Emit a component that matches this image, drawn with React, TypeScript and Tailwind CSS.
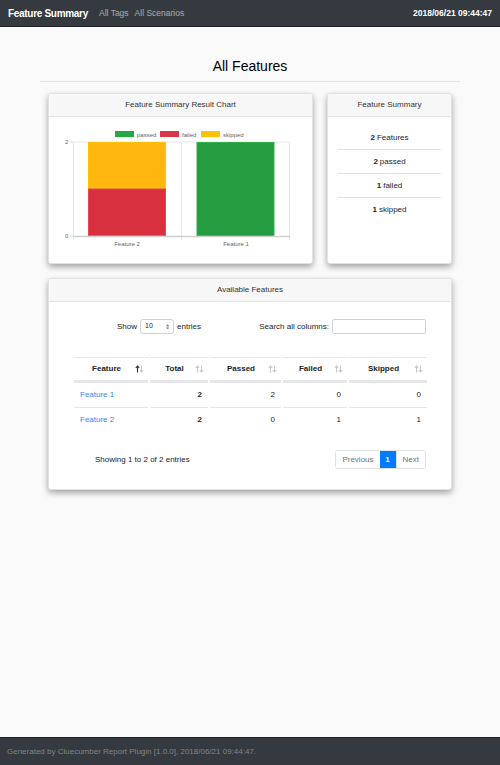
const FEATURES = [
  { name: 'Feature 1', total: 2, passed: 2, failed: 0, skipped: 0 },
  { name: 'Feature 2', total: 2, passed: 0, failed: 1, skipped: 1 },
]

const COLS = ['Feature', 'Total', 'Passed', 'Failed', 'Skipped']

/** Cluecumber-style feature summary report page. */
export default function App() {
  return (
    <div className="flex h-[765px] flex-col bg-[#fafafa] font-['Liberation_Sans',Arial,sans-serif] text-[#212529]">
      <nav className="flex h-[27px] shrink-0 items-center border-b border-[#1d2124] bg-[#343a40] px-[8px]">
        <span className="text-[10px] font-bold tracking-[-0.3px] text-white">Feature Summary</span>
        <span className="ml-[11px] text-[8.5px] text-white/55">All Tags</span>
        <span className="ml-[6px] text-[8.5px] text-white/55">All Scenarios</span>
        <span className="ml-auto text-[8.5px] font-bold text-white">2018/06/21 09:44:47</span>
      </nav>

      <main className="flex-1 px-[40px]">
        <h1 className="pt-[29px] text-center text-[14px] leading-[20px] font-medium text-black">All Features</h1>
        <hr className="mt-[5px] border-[#e3e3e3]" />

        <div className="mx-[8px] mt-[11px] flex gap-[14px]">
          <Card title="Feature Summary Result Chart" className="w-[265px]">
            <Chart />
          </Card>
          <Card title="Feature Summary" className="flex-1">
            <ul className="mx-[10px] pt-[9px] text-center text-[8px]">
              <SummaryRow n={2} label="Features" />
              <SummaryRow n={2} label="passed" />
              <SummaryRow n={1} label="failed" />
              <SummaryRow n={1} label="skipped" last />
            </ul>
          </Card>
        </div>

        <Card title="Available Features" className="mx-[8px] mt-[14px] h-[212px]">
          <div className="px-[25px]">
            <div className="mt-[17px] flex items-center text-[8px]">
              <div className="ml-[43px] flex items-center">
                <span>Show</span>
                <div className="ml-[3px] flex h-[15px] w-[34px] items-center justify-between rounded-[3px] border border-[#ced4da] bg-white pr-[3px] pl-[4px] text-[7px]">
                  <span>10</span>
                  <span className="text-[6px] leading-none text-[#555]">⇕</span>
                </div>
                <span className="ml-[3px]">entries</span>
              </div>
              <span className="ml-auto">Search all columns:</span>
              <div className="ml-[3px] h-[15px] w-[94px] rounded-[2px] border border-[#ced4da] bg-white" />
            </div>

            <div className="mt-[23px] grid grid-cols-[74px_58px_71px_64px_78px] gap-x-[2px] text-[8px]">
              {COLS.map((c) => (
                <div
                  key={c}
                  className="relative flex h-[26px] items-center justify-center border-t border-b-[3px] border-[#e5e7ea] pr-[9px] font-bold"
                >
                  {c}
                  <SortIcon active={c === 'Feature'} />
                </div>
              ))}
              {FEATURES.map((f, i) => {
                const cell =
                  'flex items-center px-[6px] ' + (i === 0 ? 'h-[25px] border-b border-[#e5e7ea]' : 'h-[24px]')
                return [
                  <div key={f.name} className={cell + ' text-[#3d86f5]'}>{f.name}</div>,
                  <div key={f.name + 't'} className={cell + ' justify-end font-bold'}>{f.total}</div>,
                  <div key={f.name + 'p'} className={cell + ' justify-end'}>{f.passed}</div>,
                  <div key={f.name + 'f'} className={cell + ' justify-end'}>{f.failed}</div>,
                  <div key={f.name + 's'} className={cell + ' justify-end'}>{f.skipped}</div>,
                ]
              })}
            </div>

            <div className="mt-[18px] flex items-center text-[8px]">
              <span className="ml-[21px]">Showing 1 to 2 of 2 entries</span>
              <div className="ml-auto flex h-[19px] overflow-hidden rounded-[3px] border border-[#dee2e6] text-[#6c757d]">
                <span className="flex items-center bg-white px-[6px]">Previous</span>
                <span className="flex w-[16px] items-center justify-center bg-[#007bff] font-bold text-white">1</span>
                <span className="flex items-center border-l border-[#dee2e6] bg-white px-[6px]">Next</span>
              </div>
            </div>
          </div>
        </Card>
      </main>

      <footer className="flex h-[28px] shrink-0 items-center border-t border-[#1d2124] bg-[#343a40] px-[7px] text-[8px] text-[#80858a]">
        Generated by Cluecumber Report Plugin [1.0.0], 2018/06/21 09:44:47.
      </footer>
    </div>
  )
}

/** DataTables-style up/down sort arrows; the up arrow darkens on the sorted column. */
function SortIcon({ active }: { active: boolean }) {
  return (
    <svg width="9" height="8" viewBox="0 0 9 8" className="absolute right-[4px]" fill="none" strokeWidth="1.1">
      <path d="M2.5 7.5V1M0.8 2.8L2.5 1L4.2 2.8" stroke={active ? '#333' : '#c8c8c8'} />
      <path d="M6.5 0.5V7M4.8 5.2L6.5 7L8.2 5.2" stroke="#c8c8c8" />
    </svg>
  )
}

function Card({
  title,
  className,
  children,
}: {
  title: string
  className?: string
  children: React.ReactNode
}) {
  return (
    <div
      className={
        'overflow-hidden rounded-[3px] border border-[#e2e2e2] bg-white shadow-[0_3px_6px_rgba(0,0,0,0.35)] ' +
        (className ?? '')
      }
    >
      <div className="flex h-[23px] items-center justify-center border-b border-[#e4e4e4] bg-[#f7f7f7] text-[8px] text-[#333]">
        {title}
      </div>
      {children}
    </div>
  )
}

function SummaryRow({ n, label, last }: { n: number; label: string; last?: boolean }) {
  return (
    <li className={'flex h-[24px] items-center justify-center ' + (last ? '' : 'border-b border-[#e2e2e2]')}>
      <b className="mr-[2px]">{n}</b>
      {label}
    </li>
  )
}

/** Stacked bar chart, drawn to the same scale as the report's Chart.js canvas. */
function Chart() {
  const top = 25
  const base = 119
  const legend = [
    { x: 66, label: 'passed', tx: 88, fill: '#28a745' },
    { x: 111, label: 'failed', tx: 133, fill: '#dc3545' },
    { x: 152, label: 'skipped', tx: 174, fill: '#ffc107' },
  ]
  return (
    <svg width="265" height="146" className="block font-['Liberation_Sans',Arial,sans-serif]">
      {legend.map((l) => (
        <g key={l.label}>
          <rect x={l.x} y={14} width={19} height={6} fill={l.fill} />
          <text x={l.tx} y={19.5} fontSize="6" fill="#666">
            {l.label}
          </text>
        </g>
      ))}

      {/* grid */}
      <line x1={24} y1={top} x2={241} y2={top} stroke="#e8e8e8" strokeWidth={1} />
      <line x1={24.5} y1={top} x2={24.5} y2={123} stroke="#e8e8e8" />
      <line x1={132.5} y1={top} x2={132.5} y2={123} stroke="#e8e8e8" />
      <line x1={240.5} y1={top} x2={240.5} y2={123} stroke="#e8e8e8" />
      <line x1={20} y1={top} x2={24} y2={top} stroke="#ddd" />
      <line x1={20} y1={base} x2={24} y2={base} stroke="#ddd" />
      <text x={16} y={top + 2} fontSize="6" fill="#666">2</text>
      <text x={16} y={base + 2} fontSize="6" fill="#666">0</text>

      {/* bars */}
      <rect x={39.5} y={top + 0.5} width={77} height={46.5} fill="#ffb70f" stroke="#ffc107" />
      <rect x={39.5} y={72} width={77} height={46.5} fill="#d9303f" stroke="#e04a58" />
      <rect x={148} y={top + 0.5} width={77} height={93.5} fill="#259c3f" stroke="#30b04e" />
      <line x1={24} y1={base + 0.5} x2={241} y2={base + 0.5} stroke="#d0d0d0" strokeWidth={1.5} />

      <text x={78} y={129} fontSize="6" fill="#666" textAnchor="middle">Feature 2</text>
      <text x={187} y={129} fontSize="6" fill="#666" textAnchor="middle">Feature 1</text>
    </svg>
  )
}
